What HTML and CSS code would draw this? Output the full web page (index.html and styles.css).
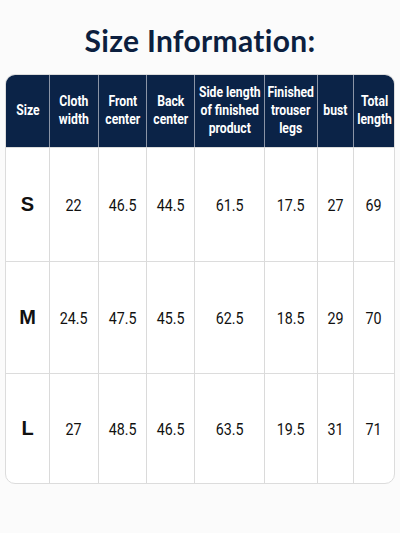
FILE: index.html
```html
<!DOCTYPE html>
<html>
<head>
<meta charset="utf-8">
<link rel="stylesheet" href="styles.css">
</head>
<body>
<div class="page">
  <h1 class="title">Size Information:</h1>
  <div class="table">
    <div class="row head">
      <div class="cell"><span>Size</span></div>
      <div class="cell"><span>Cloth<br>width</span></div>
      <div class="cell"><span>Front<br>center</span></div>
      <div class="cell"><span>Back<br>center</span></div>
      <div class="cell"><span>Side length<br>of finished<br>product</span></div>
      <div class="cell"><span>Finished<br>trouser<br>legs</span></div>
      <div class="cell"><span>bust</span></div>
      <div class="cell"><span>Total<br>length</span></div>
    </div>
    <div class="row body r1">
      <div class="cell size">S</div>
      <div class="cell"><span>22</span></div>
      <div class="cell"><span>46.5</span></div>
      <div class="cell"><span>44.5</span></div>
      <div class="cell"><span>61.5</span></div>
      <div class="cell"><span>17.5</span></div>
      <div class="cell"><span>27</span></div>
      <div class="cell"><span>69</span></div>
    </div>
    <div class="row body r2">
      <div class="cell size">M</div>
      <div class="cell"><span>24.5</span></div>
      <div class="cell"><span>47.5</span></div>
      <div class="cell"><span>45.5</span></div>
      <div class="cell"><span>62.5</span></div>
      <div class="cell"><span>18.5</span></div>
      <div class="cell"><span>29</span></div>
      <div class="cell"><span>70</span></div>
    </div>
    <div class="row body r3">
      <div class="cell size">L</div>
      <div class="cell"><span>27</span></div>
      <div class="cell"><span>48.5</span></div>
      <div class="cell"><span>46.5</span></div>
      <div class="cell"><span>63.5</span></div>
      <div class="cell"><span>19.5</span></div>
      <div class="cell"><span>31</span></div>
      <div class="cell"><span>71</span></div>
    </div>
  </div>
</div>
</body>
</html>
```
FILE: styles.css
```css
html, body {
  margin: 0;
  padding: 0;
  background: #fbfbfb;
}
.page {
  width: 400px;
  height: 533px;
  padding: 23px 5px 0;
  box-sizing: border-box;
}
.title {
  margin: 0 0 16px;
  height: 35px;
  text-align: center;
  font-family: "Lato", sans-serif;
  font-weight: 700;
  font-size: 30px;
  line-height: 35px;
  color: #0c1f3f;
  letter-spacing: 0.3px;
}
.table {
  border: 1px solid #dcdcdc;
  border-radius: 10px;
  overflow: hidden;
  background: #fff;
}
.row {
  display: grid;
  grid-template-columns: 43px 49px 48px 48px 70px 53px 36px 1fr;
}
.cell {
  display: flex;
  align-items: center;
  justify-content: center;
  text-align: center;
  border-left: 1px solid #dadada;
  font-family: "Roboto", sans-serif;
}
.cell span {
  display: inline-block;
  transform: scaleX(0.84);
  white-space: nowrap;
}
.cell:first-child {
  border-left: none;
}
.head {
  background: #0b2347;
  height: 73px;
  margin-top: -1px;
}
.head .cell {
  color: #fff;
  font-weight: 700;
  font-size: 14.5px;
  line-height: 18px;
  border-left-color: #8a94a6;
}
.body .cell {
  color: #111;
  font-size: 17px;
  border-top: 1px solid #dcdcdc;
}
.body .cell:first-child {
  border-left: none;
}
.r1 { height: 114px; }
.r2 { height: 112px; }
.r3 { height: 110px; }
.body .size {
  font-family: "Liberation Sans", sans-serif;
  font-weight: 700;
  font-size: 20px;
}
```
